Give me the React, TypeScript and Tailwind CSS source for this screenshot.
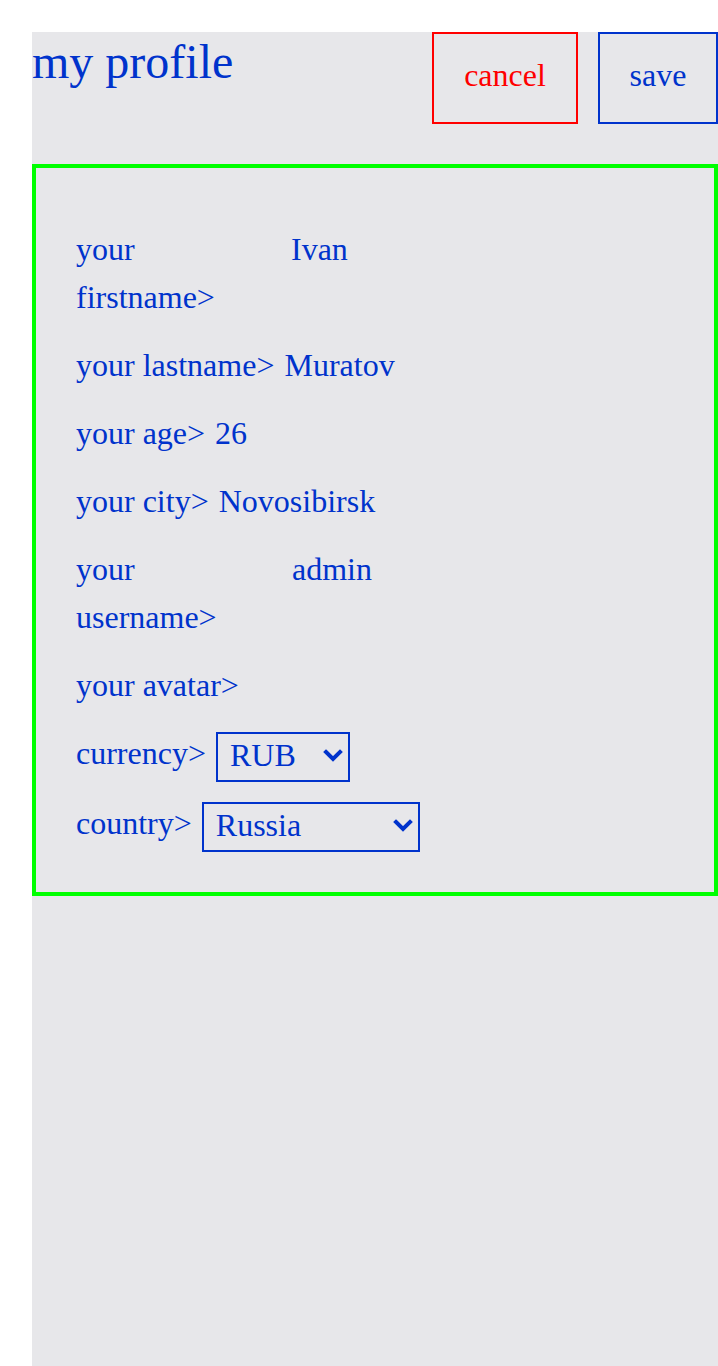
const rows = [
  { label: "your firstname>", value: "Ivan", max: "max-w-[205px]" },
  { label: "your lastname>", value: "Muratov", max: "max-w-[205px]" },
  { label: "your age>", value: "26", max: "max-w-[205px]" },
  { label: "your city>", value: "Novosibirsk", max: "max-w-[205px]" },
  { label: "your username>", value: "admin", max: "max-w-[206px]" },
  { label: "your avatar>", value: "", max: "max-w-[205px]" },
];

function Select({ value, options, width }: { value: string; options: string[]; width: string }) {
  return (
    <div className={`relative mt-[3px] h-[50px] ${width}`}>
      <select
        defaultValue={value}
        className="block h-[50px] w-full appearance-none rounded-none border-2 border-[#0033cc] bg-transparent pb-[4px] pl-[12px] text-[32px] leading-[1.15] text-[#0033cc] outline-none"
      >
        {options.map((o) => (
          <option key={o}>{o}</option>
        ))}
      </select>
      <svg
        width="20"
        height="14"
        viewBox="0 0 20 14"
        className="pointer-events-none absolute right-[7px] top-[17px]"
      >
        <polyline points="3,3 10,10 17,3" fill="none" stroke="#0033cc" strokeWidth="4" strokeLinecap="square" />
      </svg>
    </div>
  );
}

export default function App() {
  return (
    <div className="min-h-[1366px] bg-white pt-[32px] pl-[32px] font-['Liberation_Serif',serif] text-[#0033cc]">
      <div className="min-h-[1334px] bg-[#e7e7ea]">
        <div className="flex items-start justify-between">
          <h1 className="text-[48px] leading-[1] pt-[6px]">my profile</h1>
          <div className="flex gap-[20px]">
            <button className="h-[92px] w-[146px] border-2 border-[#ff0000] pb-[6px] text-[32px] text-[#ff0000]">
              cancel
            </button>
            <button className="h-[92px] w-[120px] border-2 border-[#0033cc] pb-[6px] text-[32px] text-[#0033cc]">
              save
            </button>
          </div>
        </div>

        <div className="mt-[40px] border-4 border-[#00ff00] px-[40px] pt-[57px] pb-[40px]">
          <div className="flex flex-col gap-[20px] text-[32px] leading-[48px]">
            {rows.map((r) => (
              <div key={r.label} className="flex gap-[10px]">
                <span className={r.max}>{r.label}</span>
                <span>{r.value}</span>
              </div>
            ))}
            <div className="flex items-start gap-[10px]">
              <span>currency&gt;</span>
              <Select value="RUB" options={["RUB", "USD", "EUR"]} width="w-[134px]" />
            </div>
            <div className="-mt-[3px] flex items-start gap-[10px]">
              <span>country&gt;</span>
              <Select value="Russia" options={["Russia", "Kazakhstan", "Belarus"]} width="w-[218px]" />
            </div>
          </div>
        </div>
      </div>
    </div>
  );
}
